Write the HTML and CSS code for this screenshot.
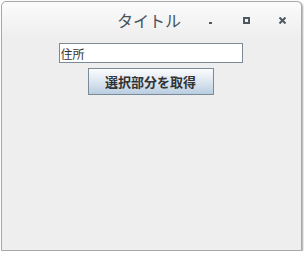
FILE: index.html
```html
<!DOCTYPE html>
<html lang="ja">
<head>
    <meta charset="UTF-8">
    <title>タイトル</title>
    <link rel="stylesheet" href="styles.css">
</head>
<body>

<div class="window">
    <div class="titlebar">
        <span class="title">タイトル</span>
        <div class="controls">
            <span class="ctl ctl-min"></span>
            <span class="ctl ctl-max"></span>
            <span class="ctl ctl-close">
                <svg width="7" height="7" viewBox="0 0 7 7">
                    <path d="M0.5 0.5 L6.5 6.5 M6.5 0.5 L0.5 6.5" stroke="#4d5a64" stroke-width="2"/>
                </svg>
            </span>
        </div>
    </div>
    <div class="content">
        <input type="text" class="field" value="住所">
        <button class="btn">選択部分を取得</button>
    </div>
</div>

</body>
</html>
```

FILE: styles.css
```css
body {
    margin: 0;
    background: #fff;
    overflow: hidden;
    font-family: "Noto Sans CJK JP", "DejaVu Sans", sans-serif;
}

.window {
    margin: 1px 0 0 1px;
    width: 301px;
    height: 250px;
    border: 1px solid #a8a8a8;
    border-radius: 5px 5px 0 0;
    background: #eeeeee;
    box-shadow: 1px 1px 2px rgba(0, 0, 0, 0.35);
    display: flex;
    flex-direction: column;
    box-sizing: border-box;
}

.titlebar {
    height: 36px;
    flex: none;
    position: relative;
    background: linear-gradient(#fbfbfb, #eeeeee);
    border-radius: 5px 5px 0 0;
}

.title {
    position: absolute;
    left: 115px;
    top: 6px;
    font-size: 16px;
    color: #46525c;
}

.controls {
    position: absolute;
    left: 190px;
    top: 14px;
    display: flex;
}

.ctl {
    width: 36px;
    height: 8px;
    display: flex;
    justify-content: center;
    align-items: center;
}

.ctl-min::before {
    content: "";
    width: 3px;
    height: 2px;
    margin-top: 6px;
    background: #4d5a64;
}

.ctl-max::before {
    content: "";
    width: 3px;
    height: 3px;
    border: 2px solid #4d5a64;
}

.ctl-close svg {
    display: block;
}

.content {
    display: flex;
    flex-direction: column;
    align-items: center;
    padding-top: 5px;
    padding-right: 2px;
}

.field {
    width: 184px;
    height: 20px;
    box-sizing: border-box;
    border: 1px solid #7a8a99;
    padding: 0 1px;
    font-family: inherit;
    font-size: 12px;
    color: #333;
    background: #fff;
    outline: none;
}

.btn {
    margin-top: 5px;
    width: 126px;
    height: 27px;
    border: 1px solid #7a8a99;
    background: linear-gradient(#fbfcfd, #dae4ee 55%, #b9cde1);
    font-family: inherit;
    font-size: 13px;
    font-weight: bold;
    color: #333;
    padding: 0;
}
```
